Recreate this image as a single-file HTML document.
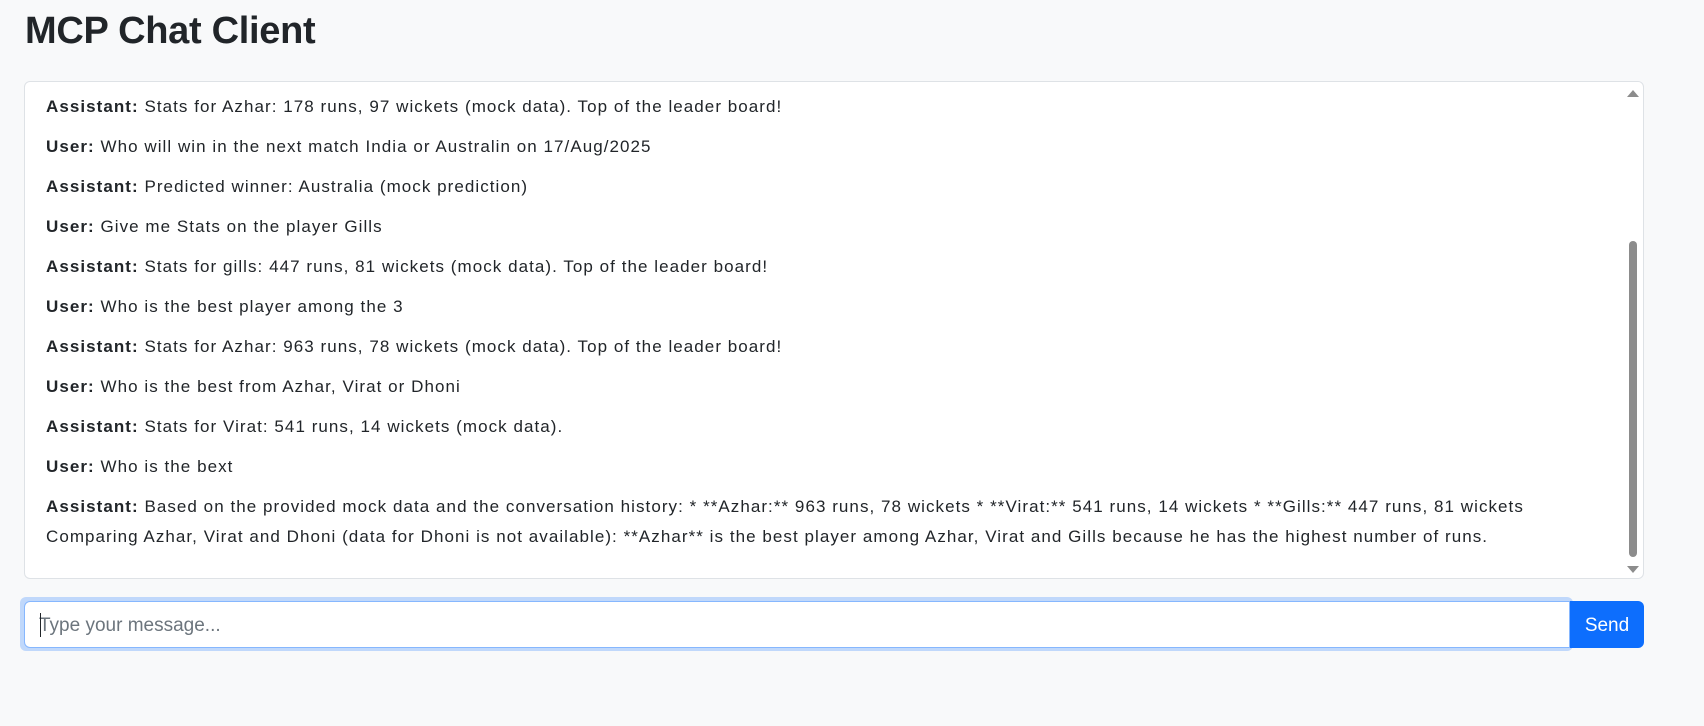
<!DOCTYPE html>
<html><head><meta charset="utf-8"><style>
*{box-sizing:border-box}
body{margin:0;background:#f8f9fa;font-family:"Segoe UI","Liberation Sans",sans-serif;color:#212529;width:1704px;height:726px;overflow:hidden;position:relative}
h1{position:absolute;left:25px;top:3px;margin:0;font-size:38px;font-weight:700;line-height:56px;letter-spacing:-0.3px}
.box{position:absolute;left:24px;top:81px;width:1620px;height:498px;background:#fff;border:1px solid #dee2e6;border-radius:6px;overflow:hidden}
.msgs{position:absolute;left:21px;top:13px;width:1580px;font-size:17px;letter-spacing:1.05px}
.msgs p{margin:0 0 16px;line-height:24px}
.msgs p.last{line-height:30px;margin-top:-3px}
.sb{position:absolute;right:2px;top:0;width:17px;height:496px;background:#fff}
.thumb{position:absolute;left:5px;top:159px;width:8px;height:316px;background:#8c8c8c;border-radius:4px}
.up{position:absolute;left:3px;top:8px;width:0;height:0;border-left:6px solid transparent;border-right:6px solid transparent;border-bottom:7px solid #8c8c8c}
.dn{position:absolute;left:3px;top:484px;width:0;height:0;border-left:6px solid transparent;border-right:6px solid transparent;border-top:7px solid #8c8c8c}
.ring{position:absolute;left:20px;top:597px;width:1553px;height:54px;background:#c0d8fb;border-radius:6px}
.inp{position:absolute;left:24px;top:601px;width:1546px;height:47px;background:#fff;border:1px solid #86b7fe;border-radius:6px 0 0 6px;font-size:19px;color:#6c757d;padding:0 14px;line-height:47px}
.caret{position:absolute;left:15px;top:11px;width:1px;height:24px;background:#212529}
.send{position:absolute;left:1570px;top:601px;width:74px;height:47px;background:#0d6efd;color:#fff;border-radius:0 6px 6px 0;font-size:19px;text-align:center;line-height:49px}
</style></head><body>
<h1>MCP Chat Client</h1>
<div class="box">
<div class="msgs">
<p><b>Assistant:</b> Stats for Azhar: 178 runs, 97 wickets (mock data). Top of the leader board!</p>
<p><b>User:</b> Who will win in the next match India or Australin on 17/Aug/2025</p>
<p><b>Assistant:</b> Predicted winner: Australia (mock prediction)</p>
<p><b>User:</b> Give me Stats on the player Gills</p>
<p><b>Assistant:</b> Stats for gills: 447 runs, 81 wickets (mock data). Top of the leader board!</p>
<p><b>User:</b> Who is the best player among the 3</p>
<p><b>Assistant:</b> Stats for Azhar: 963 runs, 78 wickets (mock data). Top of the leader board!</p>
<p><b>User:</b> Who is the best from Azhar, Virat or Dhoni</p>
<p><b>Assistant:</b> Stats for Virat: 541 runs, 14 wickets (mock data).</p>
<p><b>User:</b> Who is the bext</p>
<p class="last"><b>Assistant:</b> Based on the provided mock data and the conversation history: * **Azhar:** 963 runs, 78 wickets * **Virat:** 541 runs, 14 wickets * **Gills:** 447 runs, 81 wickets<br>Comparing Azhar, Virat and Dhoni (data for Dhoni is not available): **Azhar** is the best player among Azhar, Virat and Gills because he has the highest number of runs.</p>
</div>
<div class="sb"><div class="up"></div><div class="thumb"></div><div class="dn"></div></div>
</div>
<div class="ring"></div>
<div class="inp"><span class="caret"></span>Type your message...</div>
<div class="send">Send</div>
</body></html>
